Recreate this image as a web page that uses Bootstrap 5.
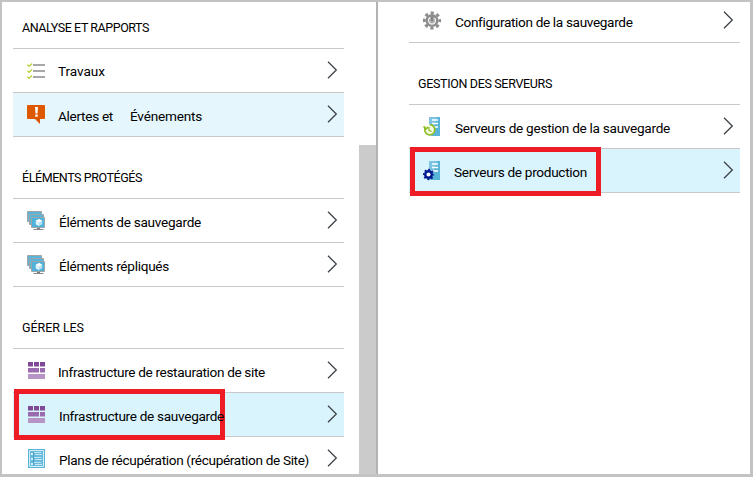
<!DOCTYPE html>
<html lang="fr">
<head>
<meta charset="utf-8">
<meta name="viewport" content="width=device-width, initial-scale=1">
<title>Paramètres du coffre</title>
<link href="https://cdn.jsdelivr.net/npm/bootstrap@5.3.0/dist/css/bootstrap.min.css" rel="stylesheet">
<style>
body{font-family:Roboto,"Liberation Sans",sans-serif;font-size:13.6px;color:#000;background:#fff}
.frame{width:753px;height:477px;border:2px solid #c3c3c3;border-right-width:3px;border-bottom-width:3px}
.pane-left{width:374px;padding-left:11px}
.pane-right{padding-left:31px}
.divider{width:2px;background:#b3b3b3}
.menu{width:331px}
.scroll-thumb{width:17px;height:329px;background:#cbcbcb}
.heading{height:62px;border-bottom:1px solid #c8c8c8;padding:0 0 10px 9px;font-size:12.5px;line-height:20px}
.heading-first{height:47px}
.entry{height:44px;border-bottom:1px solid #c8c8c8;padding:12px 6px 0 14px;color:#000}
.entry:hover{color:#000}
.entry-top{margin-top:-3px}
.ico{width:20px;height:20px;flex:none}
.chev{width:11px;height:18px;flex:none;margin-left:auto}
.txt{line-height:20px;padding-top:1px;margin-left:12px;position:relative;z-index:2}
.txt-in{margin-left:17px}
.txt-tight{margin-left:11px}
.txt-up{padding-top:0}
.hot{background:#e5f6fd}
.sel{background:#d9f4fd}
.marker{border:5px solid #ee1c24;top:-4px;left:1px;width:211px;height:51px;z-index:1}
.marker-r{top:-2px;width:191px;height:49px}
</style>
<script src="https://cdn.jsdelivr.net/npm/bootstrap@5.3.0/dist/js/bootstrap.bundle.min.js"></script>
</head>
<body class="m-0 overflow-hidden">
<svg width="0" height="0" class="position-absolute" aria-hidden="true">
 <symbol id="chevron" viewBox="0 0 11 18"><path d="M1 .8 9.3 9 1 17.2" fill="none" stroke="#3c4046" stroke-width="1.25"/></symbol>
 <symbol id="jobs" viewBox="0 0 20 20"><path d="M6 3h12M6 9h12M6 15h12" stroke="#a8a8a8" stroke-width="2"/><path d="M.4 2.8 2 4.3 5.2 1.4M.4 8.8 2 10.3 5.2 7.4M.4 14.8 2 16.3 5.2 13.4" fill="none" stroke="#b7d431" stroke-width="1.3"/></symbol>
 <symbol id="alert" viewBox="0 0 20 20"><path d="M1 0h16q1 0 1 1v12q0 1-1 1h-4v5l-5-5H1q-1 0-1-1V1q0-1 1-1z" fill="#dd5900"/><path d="M8 2h3l-.5 6.5h-2zM8.3 9.5h2.4v2.2H8.300z" fill="#fff"/></symbol>
 <symbol id="screens" viewBox="0 0 20 20"><g stroke="#a0a5a8"><path d="M.5 .5h14v10H.5z" fill="#59b4d9"/><path d="M2.500 3.500h14v10h-14z" fill="#59b4d9"/><path d="M4.500 6.500h13v10h-13z" fill="#59b4d9"/></g><path d="M5 7h12v9H5z" fill="#4fb2da"/><path d="M10 17h3v1.500h3V19H7v-.5h3z" fill="#7a7a7a"/><path d="M6.500 18.500h10" stroke="#8a8a8a"/><path d="m12 8 3.200 1.700v3.500L12 15l-3.200-1.800V9.700z" fill="#b9e2f3"/><path d="m12 8 3.200 1.700L12 11.400 8.800 9.700z" fill="#fff"/><path d="M12 11.400V15l-3.200-1.800V9.700z" fill="#dff2fa"/></symbol>
 <symbol id="infra" viewBox="0 0 20 20"><path d="M1 1h5v4.600H1zM7 1h5v4.600H7zM13 1h5v4.600h-5z" fill="#804998"/><path d="M1 7h11v4.600H1zM13 7h5v4.600h-5z" fill="#9b6bb0"/><path d="M1 13h17v5H1z" fill="#b695c5"/></symbol>
 <symbol id="plan" viewBox="0 0 20 20"><path d="M1 0h17v19H1z" fill="#59b4d9"/><path d="M2.500 1.500h14v16h-14z" fill="#68bbdc" stroke="#d4edf7"/><path d="M4 4h2v2H4zM4 9h2v2H4zM4 14h2v2H4z" fill="#d9f1fa"/><path d="M7 3.500h7M8 5.500h7M7 8.500h7M8 10.500h7M7 13.500h7M8 15.500h7" stroke="#c5e7f4"/><path d="M6.500 3v13" stroke="#3999c6" stroke-width=".8"/></symbol>
 <symbol id="gear" viewBox="0 0 20 20"><circle cx="9" cy="9.500" r="6.500" fill="#8c8c8c"/><circle cx="9" cy="9.500" r="7.700" fill="none" stroke="#8c8c8c" stroke-width="2.800" stroke-dasharray="3.200 2.847" stroke-dashoffset="1.600"/><circle cx="9" cy="9.500" r="3.500" fill="#a9a9a9" stroke="#f2f2f2" stroke-width="1.300" stroke-dasharray="17 5" transform="rotate(-45 9 9.500)"/><path d="M9 6v4" stroke="#777" stroke-width="1.500"/></symbol>
 <symbol id="tower" viewBox="0 0 20 20"><path d="M6 0h11v19H6z" fill="#59b4d9"/><path d="M6 0h8L8 19H6z" fill="#7cc4e2"/><path d="M9 3h6M9 6.500h6M9 10h6" stroke="#fff" stroke-width="1.700"/></symbol>
 <symbol id="srv-backup" viewBox="0 0 20 20"><use href="#tower" width="20" height="20"/><circle cx="6.500" cy="13" r="5.600" fill="#f4fae5"/><path d="M2.500 10.200a5 5 0 1 0 4.500-2.400M.8 9.200l1.500 3.300 2.800-2.400" fill="none" stroke="#8cbc1f" stroke-width="1.600"/><path d="M6 10v3.300l2.600 1.200" fill="none" stroke="#8cbc1f" stroke-width="1.200"/></symbol>
 <symbol id="srv-prod" viewBox="0 0 20 20"><use href="#tower" width="20" height="20"/><circle cx="5.500" cy="13.500" r="3.300" fill="#fff" stroke="#00188f" stroke-width="2.400"/><circle cx="5.500" cy="13.500" r="4.900" fill="none" stroke="#00188f" stroke-width="1.500" stroke-dasharray="1.900 1.948" stroke-dashoffset=".95"/></symbol>
</svg>
<main class="frame d-flex overflow-hidden">
 <section class="pane-left d-flex justify-content-between flex-shrink-0">
  <nav class="menu">
   <div class="heading heading-first d-flex align-items-end"><span data-w="127">ANALYSE ET RAPPORTS</span></div>
   <a class="entry d-flex align-items-start text-decoration-none"><svg class="ico"><use href="#jobs" y="1"/></svg><span class="txt txt-tight txt-up" data-w="47">Travaux</span><svg class="chev"><use href="#chevron"/></svg></a>
   <a class="entry hot d-flex align-items-start text-decoration-none"><svg class="ico"><use href="#alert"/></svg><span class="txt txt-tight" data-w="55">Alertes et</span><span class="txt txt-in" data-w="72">Événements</span><svg class="chev"><use href="#chevron"/></svg></a>
   <div class="heading d-flex align-items-end"><span data-w="120">ÉLÉMENTS PROTÉGÉS</span></div>
   <a class="entry d-flex align-items-start text-decoration-none"><svg class="ico"><use href="#screens"/></svg><span class="txt" data-w="142">Éléments de sauvegarde</span><svg class="chev"><use href="#chevron"/></svg></a>
   <a class="entry d-flex align-items-start text-decoration-none"><svg class="ico"><use href="#screens"/></svg><span class="txt" data-w="110">Éléments répliqués</span><svg class="chev"><use href="#chevron"/></svg></a>
   <div class="heading d-flex align-items-end"><span data-w="62">GÉRER LES</span></div>
   <a class="entry d-flex align-items-start text-decoration-none"><svg class="ico"><use href="#infra"/></svg><span class="txt txt-tight" data-w="207">Infrastructure de restauration de site</span><svg class="chev"><use href="#chevron"/></svg></a>
   <a class="entry sel d-flex align-items-start text-decoration-none position-relative"><i class="marker position-absolute"></i><svg class="ico"><use href="#infra"/></svg><span class="txt" data-w="165">Infrastructure de sauvegarde</span><svg class="chev"><use href="#chevron"/></svg></a>
   <a class="entry d-flex align-items-start text-decoration-none"><svg class="ico"><use href="#plan"/></svg><span class="txt" data-w="250">Plans de récupération (récupération de Site)</span><svg class="chev"><use href="#chevron"/></svg></a>
  </nav>
  <div class="scroll-thumb align-self-end"></div>
 </section>
 <div class="divider flex-shrink-0"></div>
 <section class="pane-right">
  <nav class="menu">
   <a class="entry entry-top d-flex align-items-start text-decoration-none"><svg class="ico"><use href="#gear"/></svg><span class="txt" data-w="177">Configuration de la sauvegarde</span><svg class="chev"><use href="#chevron"/></svg></a>
   <div class="heading d-flex align-items-end"><span data-w="134">GESTION DES SERVEURS</span></div>
   <a class="entry d-flex align-items-start text-decoration-none"><svg class="ico"><use href="#srv-backup"/></svg><span class="txt" data-w="215">Serveurs de gestion de la sauvegarde</span><svg class="chev"><use href="#chevron"/></svg></a>
   <a class="entry sel d-flex align-items-start text-decoration-none position-relative"><i class="marker marker-r position-absolute"></i><svg class="ico"><use href="#srv-prod"/></svg><span class="txt txt-tight" data-w="133">Serveurs de production</span><svg class="chev"><use href="#chevron"/></svg></a>
  </nav>
 </section>
</main>
<script>
document.querySelectorAll('[data-w]').forEach(function (el) {
  el.style.whiteSpace = 'nowrap';
  var gap = (el.dataset.w - el.getBoundingClientRect().width) / el.textContent.length;
  el.style.letterSpacing = gap.toFixed(3) + 'px';
});
</script>
</body>
</html>
